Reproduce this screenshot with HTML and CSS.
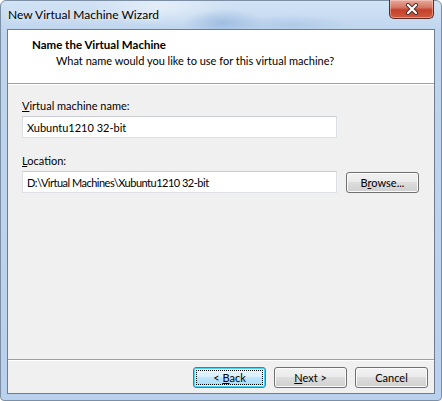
FILE: index.html
```html
<!DOCTYPE html>
<html lang="en">
<head>
<meta charset="UTF-8" />
<title>New Virtual Machine Wizard</title>
<link rel="stylesheet" href="styles.css">
</head>
<body>

<!-- Ventana del asistente -->
<div class="window">
  <div class="titlebar">
    <span class="title">New Virtual Machine Wizard</span>
    <button class="close-btn" aria-label="Close">
      <svg viewBox="0 0 14 12" width="14" height="12">
        <path d="M3 2 L11 10 M11 2 L3 10" stroke="#4a2a28" stroke-width="4" stroke-linecap="round" />
        <path d="M3 2 L11 10 M11 2 L3 10" stroke="#ffffff" stroke-width="2.2" stroke-linecap="round" />
      </svg>
    </button>
  </div>

  <div class="client">
    <div class="header">
      <h1>Name the Virtual Machine</h1>
      <p>What name would you like to use for this virtual machine?</p>
    </div>

    <div class="content">
      <label class="field-label"><u>V</u>irtual machine name:</label>
      <div class="row">
        <input class="textbox" type="text" value="Xubuntu1210 32-bit" />
      </div>

      <label class="field-label second"><u>L</u>ocation:</label>
      <div class="row">
        <input class="textbox path" type="text" value="D:\Virtual Machines\Xubuntu1210 32-bit" />
        <button class="btn browse">B<u>r</u>owse...</button>
      </div>
    </div>

    <div class="footer">
      <button class="btn default"><span class="focus">&lt; <u>B</u>ack</span></button>
      <button class="btn"><u>N</u>ext &gt;</button>
      <button class="btn">Cancel</button>
    </div>
  </div>
</div>

</body>
</html>
```

FILE: styles.css
```css
/* Reset */
* {
  margin: 0; padding: 0; box-sizing: border-box;
}
body {
  font-family: Lato, "Noto Sans", sans-serif;
  font-size: 11px;
  color: #000;
  background: #fff;
}

/* Marco de la ventana (Aero) */
.window {
  width: 442px;
  height: 401px;
  display: flex;
  flex-direction: column;
  border: 1px solid #7d8fa5;
  border-radius: 6px 6px 4px 4px;
  padding: 0 6px 6px 6px;
  background:
    radial-gradient(ellipse 40px 14px at 222px 22px, rgba(90,140,200,0.35), transparent),
    radial-gradient(ellipse 60px 10px at 290px 24px, rgba(120,160,205,0.25), transparent),
    radial-gradient(ellipse 70px 20px at 160px 6px, rgba(255,255,255,0.45), transparent),
    linear-gradient(#d2e3f5, #bfd5ee 30px, #b9d1ec);
}

.titlebar {
  height: 28px;
  display: flex;
  align-items: flex-start;
}
.title {
  padding: 6px 0 0 1px;
  font-size: 12px;
  line-height: 16px;
  color: #000;
  text-shadow: 0 0 6px rgba(255,255,255,0.9);
}
.close-btn {
  margin-left: auto;
  margin-right: 1px;
  width: 45px;
  height: 19px;
  margin-top: -1px;
  border: 1px solid #5b2b26;
  border-top: none;
  border-radius: 0 0 5px 5px;
  background: linear-gradient(#e9a99b, #d47a66 40%, #c4412a 55%, #cf5a3f);
  box-shadow: inset 0 0 0 1px rgba(255,220,210,0.45);
  display: flex;
  justify-content: center;
  align-items: center;
}

/* Área cliente */
.client {
  flex: 1;
  display: flex;
  flex-direction: column;
  border: 1px solid #6d7c90;
  background: #f0f0f0;
}

.header {
  height: 54px;
  background: #fff;
  border-bottom: 1px solid #a0a0a0;
  box-shadow: 0 1px 0 #fff;
  padding: 7px 0 0 24px;
}
.header h1 {
  font-size: 11.5px;
  font-weight: 700;
  line-height: 16px;
}
.header p {
  padding-left: 24px;
  line-height: 15px;
}

.content {
  flex: 1;
  padding: 14px 0 0 14px;
  display: flex;
  flex-direction: column;
}
.field-label {
  line-height: 16px;
  margin-bottom: 2px;
}
.field-label.second {
  margin-top: 15px;
}
.row {
  display: flex;
  align-items: center;
  gap: 9px;
}
.textbox {
  width: 315px;
  height: 22px;
  font: inherit;
  color: #000;
  padding: 0 4px;
  background: #fff;
  border: 1px solid #dcdfe4;
  border-top-color: #c9cdd3;
  outline: none;
}
.textbox.path {
  letter-spacing: -0.5px;
}

/* Botones estilo Windows 7 */
.btn {
  width: 73px;
  height: 21px;
  font: inherit;
  color: #000;
  text-align: center;
  line-height: 19px;
  border: 1px solid #707070;
  border-radius: 3px;
  background: linear-gradient(#f2f2f2, #ebebeb 45%, #dddddd 50%, #cfcfcf);
  box-shadow: inset 0 0 0 1px #fbfbfb;
}
.btn.default {
  border-color: #3c7fb1;
  padding: 2px;
  box-shadow: inset 0 0 0 1px #48d5f6, inset 0 0 0 2px rgba(255,255,255,0.6);
  background: linear-gradient(#eaf6fd, #d9f0fc 45%, #bee6fd 50%, #a7d9f5);
}
.btn.default .focus {
  display: block;
  height: 100%;
  line-height: 13px;
  border: 1px dotted #000;
}

.footer {
  height: 34px;
  border-top: 1px solid #a0a0a0;
  box-shadow: inset 0 1px 0 #fff;
  display: flex;
  justify-content: flex-end;
  gap: 8px;
  padding: 7px 6px 0 0;
}
```
